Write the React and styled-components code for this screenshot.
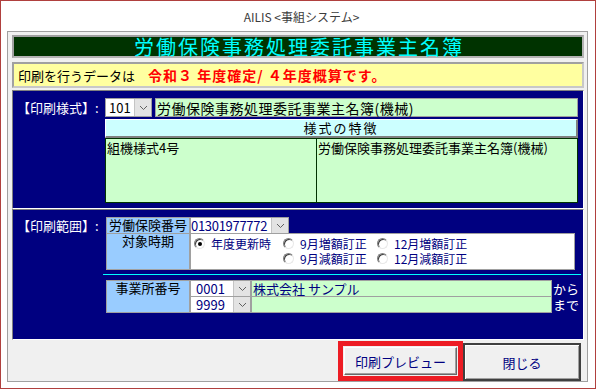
import React from "react";
import styled, { createGlobalStyle } from "styled-components";

const FONT = `"Noto Sans CJK JP", "Noto Sans", sans-serif`;

const Global = createGlobalStyle`
  * { box-sizing: border-box; }
  html, body { margin: 0; padding: 0; background: #fff; }
  body { font-family: ${FONT}; }
`;

const Window = styled.div`
  width: 596px;
  height: 389px;
  border: 1px solid #b0403e;
  background: #fff;
  display: flex;
  flex-direction: column;
`;

const TitleBar = styled.div`
  height: 30px;
  display: flex;
  align-items: center;
  justify-content: center;
  padding-left: 7px;
  font-size: 12px;
  color: #3c3c3c;
`;

const Panel = styled.div`
  margin: 0 7px 6px 6px;
  height: 351px;
  border: 1px solid #a0a0a0;
  background: #f0f0f0;
  padding: 3px 3px 0 4px;
  display: flex;
  flex-direction: column;
`;

const Heading = styled.div`
  height: 23px;
  background: #003300;
  border: 2px solid;
  border-color: #a0a0a0 #b4b4b4 #b4b4b4 #a0a0a0;
  color: #00ffff;
  font-size: 20px;
  letter-spacing: 2px;
  padding-left: 2px;
  line-height: 19px;
  text-align: center;
`;

const InfoBar = styled.div`
  margin-top: 4px;
  height: 26px;
  background: #ffffa0;
  border: 2px solid;
  border-color: #a0a0a0 #c8c8c8 #c8c8c8 #a0a0a0;
  display: flex;
  align-items: center;
  gap: 13px;
  padding-left: 4px;
  font-size: 13px;
  color: #000;
`;

const Alert = styled.span`
  color: #ff0000;
  font-weight: bold;
  font-size: 14px;
  letter-spacing: 1px;
`;

const BlueArea = styled.div`
  margin-top: 2px;
  height: 250px;
  background: #000080;
  display: flex;
  flex-direction: column;
`;

const Section = styled.div`
  border: 1px solid;
  border-color: #808080 #ffffff #ffffff #808080;
  display: grid;
  grid-template-columns: ${(p) => p.$labelWidth}px 1fr;
  align-items: start;
  padding-top: ${(p) => p.$padTop}px;
  height: ${(p) => (p.$height ? `${p.$height}px` : "auto")};
  flex: ${(p) => (p.$height ? "none" : "1")};
`;

const SectionLabel = styled.div`
  color: #fff;
  font-size: 13px;
  padding-left: 4px;
  line-height: ${(p) => p.$lh}px;
  height: ${(p) => p.$lh}px;
  white-space: nowrap;
`;

const StyleBlock = styled.div`
  width: 473px;
  display: flex;
  flex-direction: column;
`;

const ComboRow = styled.div`
  display: flex;
  height: 19px;
  gap: 3px;
`;

const Combo = styled.div`
  width: ${(p) => p.$w}px;
  flex: none;
  display: flex;
  border: 1px solid #a0a0a0;
  background: #fff;
`;

const ComboValue = styled.div`
  flex: 1;
  display: flex;
  align-items: center;
  font-size: 13px;
  letter-spacing: ${(p) => p.$ls || 0}px;
  color: ${(p) => p.$color || "#000"};
  padding-left: ${(p) => p.$pad ?? 3}px;
  line-height: 14px;
  white-space: nowrap;
`;

const DropBtn = styled.div`
  width: 17px;
  flex: none;
  background: #e3e3e3;
  border-left: 1px solid #c4c4c4;
  display: flex;
  align-items: center;
  justify-content: center;
`;

const GreenField = styled.div`
  flex: ${(p) => (p.$w ? "none" : "1")};
  width: ${(p) => (p.$w ? `${p.$w}px` : "auto")};
  display: flex;
  align-items: center;
  background: #ccffcc;
  border: 1px solid #a0a0a0;
  font-size: ${(p) => p.$size}px;
  letter-spacing: ${(p) => p.$ls || 0}px;
  color: ${(p) => p.$color || "#000"};
  padding-left: 1px;
  line-height: 14px;
  white-space: nowrap;
`;

const FeatureHeader = styled.div`
  margin-top: 2px;
  height: 19px;
  background: #ccffff;
  border-style: solid;
  border-width: 1px 2px 2px 1px;
  border-color: #ffffff #808080 #808080 #ffffff;
  font-size: 13px;
  letter-spacing: 2px;
  line-height: 16px;
  text-align: center;
  color: #000;
`;

const FeatureCells = styled.div`
  height: 65px;
  display: grid;
  grid-template-columns: 210px 1fr;
  border: 1px solid #003300;
  background: #ccffcc;
`;

const FeatureCell = styled.div`
  font-size: 13px;
  line-height: 15px;
  padding: 1px 1px 0 1px;
  color: #000;
  white-space: nowrap;
  border-left: ${(p) => (p.$divider ? "1px solid #003300" : "none")};
`;

const RangeTable = styled.div`
  width: 474px;
  display: flex;
  flex-direction: column;
`;

const TRow = styled.div`
  display: flex;
  height: ${(p) => p.$h}px;
  margin-top: ${(p) => p.$mt || 0}px;
`;

const CellLabel = styled.div`
  width: 84px;
  flex: none;
  background: #99ccff;
  border: 1px solid #a0a0a0;
  font-size: 13px;
  line-height: 14px;
  text-align: center;
  color: #000;
  white-space: nowrap;
`;

const RadioBox = styled.div`
  width: 385px;
  flex: none;
  background: #fff;
  border: 1px solid #a0a0a0;
  display: grid;
  grid-template-columns: 89px 94px auto;
  grid-auto-rows: 15px;
  padding: 2px 0 0 3px;
`;

const RadioItem = styled.div`
  display: flex;
  align-items: center;
  gap: 6px;
  font-size: 12px;
  line-height: 14px;
  color: #000080;
  white-space: nowrap;
`;

const RadioCircle = styled.span`
  width: 11px;
  height: 11px;
  flex: none;
  border-radius: 50%;
  background: #fff;
  border: 1px solid;
  border-color: #808080 #e8e8e8 #e8e8e8 #808080;
  box-shadow: inset 1px 1px 0 #404040;
  display: flex;
  align-items: center;
  justify-content: center;
  &::after {
    content: "";
    width: 4px;
    height: 4px;
    border-radius: 50%;
    background: ${(p) => (p.$checked ? "#000" : "transparent")};
  }
`;

const CyanRule = styled.div`
  margin: 4px 0 5px -3px;
  width: 478px;
  height: 1px;
  background: #00ffff;
`;

const OfficeRows = styled.div`
  display: flex;
  flex-direction: column;
`;

const SubRow = styled.div`
  display: flex;
  height: 17px;
  margin-top: ${(p) => (p.$first ? 0 : -1)}px;
`;

const Suffix = styled.span`
  color: #fff;
  font-size: 13px;
  line-height: 14px;
  align-self: center;
  margin-left: 1px;
  white-space: nowrap;
`;

const ButtonRow = styled.div`
  margin-top: 1px;
  height: 39px;
  display: flex;
  justify-content: flex-end;
  align-items: flex-start;
  padding-right: 3px;
`;

const RedFrame = styled.div`
  width: 125px;
  height: 40px;
  border: 5px solid #ed1c24;
  padding: 1px;
  display: flex;
`;

const Btn = styled.button`
  flex: ${(p) => (p.$w ? "none" : "1")};
  width: ${(p) => (p.$w ? `${p.$w}px` : "auto")};
  height: ${(p) => (p.$h ? `${p.$h}px` : "auto")};
  margin-top: ${(p) => p.$mt || 0}px;
  background: #f0f0f0;
  font-family: ${FONT};
  font-size: 13px;
  color: #000080;
  padding: 0;
  border: ${(p) => (p.$default ? "2px solid #404040" : "1px solid")};
  border-color: ${(p) => (p.$default ? "#404040" : "#ffffff #696969 #696969 #ffffff")};
  box-shadow: ${(p) =>
    p.$default
      ? "inset 1px 1px 0 #fff, inset -1px -1px 0 #a0a0a0"
      : "inset -1px -1px 0 #a0a0a0"};
`;

const Chevron = () => (
  <svg width="9" height="6" viewBox="0 0 9 6">
    <polyline points="1,1 4.5,4.5 8,1" fill="none" stroke="#606060" strokeWidth="1" />
  </svg>
);

const ComboBox = ({ w, value, color, pad, ls }) => (
  <Combo $w={w}>
    <ComboValue $color={color} $pad={pad} $ls={ls}>{value}</ComboValue>
    <DropBtn><Chevron /></DropBtn>
  </Combo>
);

const Radio = ({ label, checked }) => (
  <RadioItem>
    <RadioCircle $checked={checked} />
    <span>{label}</span>
  </RadioItem>
);

export default function App() {
  return (
    <>
      <Global />
      <Window>
        <TitleBar>AILIS &lt;事組システム&gt;</TitleBar>
        <Panel>
          <Heading>労働保険事務処理委託事業主名簿</Heading>
          <InfoBar>
            <span>印刷を行うデータは</span>
            <Alert>令和３ 年度確定/ ４年度概算です。</Alert>
          </InfoBar>
          <BlueArea>
            <Section $labelWidth={92} $padTop={7} $height={119}>
              <SectionLabel $lh={19}>【印刷様式】:</SectionLabel>
              <StyleBlock>
                <ComboRow>
                  <ComboBox w={47} value="101" />
                  <GreenField $size={14} $ls={0.5}>
                    労働保険事務処理委託事業主名簿(機械)
                  </GreenField>
                </ComboRow>
                <FeatureHeader>様式の特徴</FeatureHeader>
                <FeatureCells>
                  <FeatureCell>組機様式4号</FeatureCell>
                  <FeatureCell $divider>労働保険事務処理委託事業主名簿(機械)</FeatureCell>
                </FeatureCells>
              </StyleBlock>
            </Section>
            <Section $labelWidth={93} $padTop={7}>
              <SectionLabel $lh={17}>【印刷範囲】:</SectionLabel>
              <RangeTable>
                <TRow $h={17}>
                  <CellLabel>労働保険番号</CellLabel>
                  <ComboBox w={99} value="01301977772" color="#000080" pad={0} ls={-0.3} />
                </TRow>
                <TRow $h={37} $mt={-1}>
                  <CellLabel>対象時期</CellLabel>
                  <RadioBox>
                    <Radio label="年度更新時" checked />
                    <Radio label="9月増額訂正" />
                    <Radio label="12月増額訂正" />
                    <span />
                    <Radio label="9月減額訂正" />
                    <Radio label="12月減額訂正" />
                  </RadioBox>
                </TRow>
                <CyanRule />
                <TRow $h={33}>
                  <CellLabel>事業所番号</CellLabel>
                  <OfficeRows>
                    <SubRow $first>
                      <ComboBox w={61} value="0001" color="#000080" pad={5} />
                      <GreenField $w={301} $size={13} $color="#000080">
                        株式会社 サンプル
                      </GreenField>
                      <Suffix>から</Suffix>
                    </SubRow>
                    <SubRow>
                      <ComboBox w={61} value="9999" color="#000080" pad={5} />
                      <GreenField $w={301} $size={13} />
                      <Suffix>まで</Suffix>
                    </SubRow>
                  </OfficeRows>
                </TRow>
              </RangeTable>
            </Section>
          </BlueArea>
          <ButtonRow>
            <RedFrame>
              <Btn>印刷プレビュー</Btn>
            </RedFrame>
            <Btn $default $w={118} $h={38} $mt={2}>閉じる</Btn>
          </ButtonRow>
        </Panel>
      </Window>
    </>
  );
}
